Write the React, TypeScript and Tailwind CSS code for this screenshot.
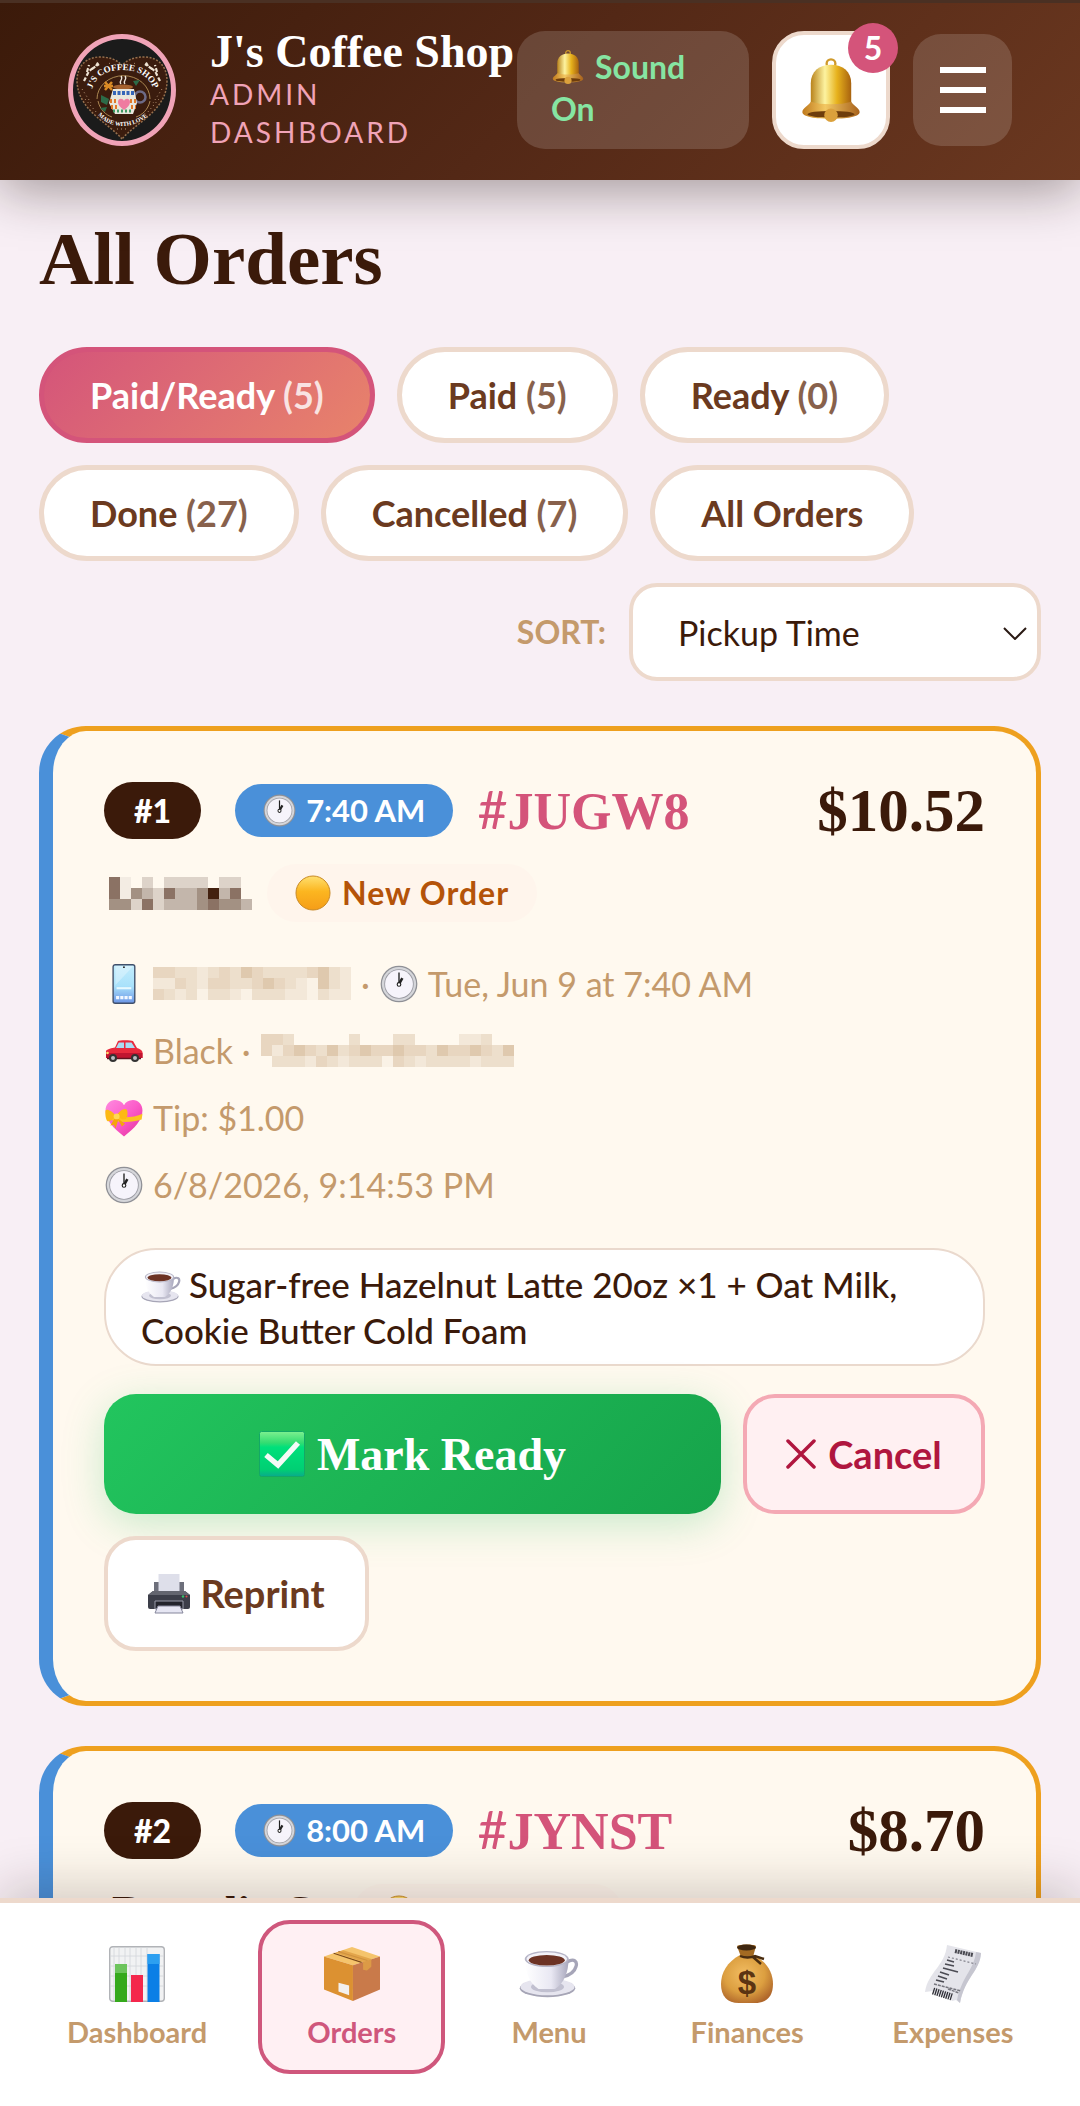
import { ReactNode, useState } from "react";
import clsx from "clsx";

const BellIcon = ({ className }: { className?: string }) => (
  <svg className={className} viewBox="0 0 36 38" aria-hidden="true">
    <defs>
      <linearGradient id="bellBody" x1="0" x2="1">
        <stop offset="0" stopColor="#b9831c" />
        <stop offset="0.35" stopColor="#fdf3a0" />
        <stop offset="0.65" stopColor="#e7b21c" />
        <stop offset="1" stopColor="#a8620f" />
      </linearGradient>
      <linearGradient id="bellRim" x1="0" x2="1">
        <stop offset="0" stopColor="#c07a1d" />
        <stop offset="0.4" stopColor="#f3c862" />
        <stop offset="1" stopColor="#a8621c" />
      </linearGradient>
    </defs>
    <circle cx="18" cy="3.4" r="2.6" fill="none" stroke="#cf9a2b" strokeWidth="1.4" />
    <path d="M6 30V15C6 8 11 4 18 4s12 4 12 11v15z" fill="url(#bellBody)" />
    <path d="M6 26c-1 2-5 4-5 6 0 3 8 4 17 4s17-1 17-4c0-2-4-4-5-6-6 2-18 2-24 0z" fill="url(#bellRim)" />
    <ellipse cx="18" cy="33.4" rx="14" ry="2" fill="#6e3d0c" />
    <circle cx="18" cy="34" r="4" fill="#dba13c" />
  </svg>
);

const ClockIcon = ({ className }: { className?: string }) => (
  <svg className={className} viewBox="0 0 36 36" aria-hidden="true">
    <circle cx="18" cy="18" r="17.4" fill="#8f9096" />
    <circle cx="18" cy="18" r="16.2" fill="#d5d6da" />
    <circle cx="18" cy="18" r="14" fill="#9b9ba3" />
    <circle cx="18" cy="18" r="13.2" fill="#f6f4fb" />
    <path d="M18 18V7" stroke="#222" strokeWidth="1.3" />
    <path d="M18 18l3.2-5.6" stroke="#222" strokeWidth="2.4" />
    <circle cx="18" cy="18.4" r="1.7" fill="#fff" stroke="#222" strokeWidth="1.1" />
  </svg>
);

const PhoneIcon = ({ className }: { className?: string }) => (
  <svg className={className} viewBox="0 0 36 38" aria-hidden="true">
    <defs>
      <linearGradient id="phoneScreen" x1="0" x2="0" y1="0" y2="1">
        <stop offset="0" stopColor="#c3ecfc" />
        <stop offset="0.55" stopColor="#a9e2fb" />
        <stop offset="1" stopColor="#6c95e6" />
      </linearGradient>
    </defs>
    <rect x="7.7" y="0.7" width="20.6" height="36.6" rx="2" fill="url(#phoneScreen)" stroke="#41506b" strokeWidth="1.3" />
    <path d="M27 2L10 20V2z" fill="#fff" opacity="0.3" />
    <circle cx="18" cy="3" r="0.9" fill="#222" />
    <path d="M11 23h14" stroke="#e6f9ff" strokeWidth="2" />
    <path d="M10.5 32h15" stroke="#f2f7ff" strokeWidth="3" strokeDasharray="3 1" />
  </svg>
);

const CarIcon = ({ className }: { className?: string }) => (
  <svg className={className} viewBox="0 0 38 24" aria-hidden="true">
    <path d="M1 12c1-2 6-3 9-3.5L13 2c1-1 13-1 15 0l4 7c3 1 5 2 5.5 4v6H1z" fill="#e8293d" />
    <path d="M1 14h36.5v5H1z" fill="#c11430" />
    <path d="M11 9l2.8-5.500H19V9zM20.5 9V3.5h6L30 9z" fill="#a9dcf3" />
    <path d="M2 19.5h34" stroke="#5f1220" strokeWidth="1.6" />
    <circle cx="8" cy="19" r="4" fill="#333" />
    <circle cx="8" cy="19" r="2" fill="#b9bcc3" />
    <circle cx="30" cy="19" r="4" fill="#333" />
    <circle cx="30" cy="19" r="2" fill="#b9bcc3" />
    <circle cx="2.5" cy="14" r="1.3" fill="#ffd96b" />
  </svg>
);

const GiftHeartIcon = ({ className }: { className?: string }) => (
  <svg className={className} viewBox="0 0 36 36" aria-hidden="true">
    <defs>
      <linearGradient id="giftHeart" x1="0" x2="1" y1="0" y2="1">
        <stop offset="0" stopColor="#ff8ae0" />
        <stop offset="0.5" stopColor="#fb5cc9" />
        <stop offset="1" stopColor="#e32d9c" />
      </linearGradient>
    </defs>
    <path d="M18 35.5C8 28 .5 20 .5 11 .5 5 4.5 1 9.5 1c4 0 7 2 8.5 5 1.5-3 4.500-5 8.500-5 5 0 9 4 9 10 0 9-7.500 17-17.500 24.500z" fill="url(#giftHeart)" />
    <path d="M1 14c8 4 25 5 34.500 0l-.8 5.500c-9 3-22 3-31 0z" fill="#fcc321" />
    <path d="M10 16c-3-5-9-7-9.500-5s0 9 2 10 6-3 7.500-5zM11 16c2-5 8-8 9.500-6s1 8-1 9-6-1-8.500-3z" fill="#fdb913" />
    <path d="M10 17l-5 8 3.500-.5L10 28l2.500-8 3.500 6 3-2.500z" fill="#f5a50b" />
    <circle cx="11" cy="16.5" r="2.8" fill="#ffd952" />
  </svg>
);

const CupIcon = ({ className }: { className?: string }) => (
  <svg className={className} viewBox="0 0 40 32" aria-hidden="true">
    <defs>
      <linearGradient id="cupBody" x1="0" x2="1">
        <stop offset="0" stopColor="#ffffff" />
        <stop offset="0.6" stopColor="#e9e8f3" />
        <stop offset="1" stopColor="#a9a8bd" />
      </linearGradient>
    </defs>
    <ellipse cx="19" cy="25.5" rx="18.5" ry="6" fill="#a6a5b6" />
    <ellipse cx="19" cy="24.6" rx="18" ry="5.6" fill="#e6e5ef" />
    <ellipse cx="19" cy="24.6" rx="11" ry="3.6" fill="#c1c0d0" />
    <path d="M32 8c5-3 7 0 6 3-1 4-5 6-9 7" fill="none" stroke="#a6a5b8" strokeWidth="2.2" />
    <path d="M4 6c0 9 3 16 9 20h11c6-4 9-11 9-20z" fill="url(#cupBody)" />
    <ellipse cx="18.5" cy="6" rx="14.7" ry="5.4" fill="#b5b4c6" />
    <ellipse cx="18.5" cy="6" rx="13.5" ry="4.5" fill="#f3f2f8" />
    <ellipse cx="18.5" cy="6.8" rx="12" ry="3.5" fill="#6d3324" />
  </svg>
);

const CheckIcon = ({ className }: { className?: string }) => (
  <svg className={className} viewBox="0 0 46 46" aria-hidden="true">
    <defs>
      <linearGradient id="checkTile" x1="0" x2="0" y1="0" y2="1">
        <stop offset="0" stopColor="#7df08f" />
        <stop offset="0.25" stopColor="#33dd72" />
        <stop offset="0.35" stopColor="#00e07b" />
        <stop offset="0.85" stopColor="#00cf73" />
        <stop offset="1" stopColor="#0aa98c" />
      </linearGradient>
    </defs>
    <rect x="0.5" y="0.5" width="45" height="45" rx="2" fill="url(#checkTile)" stroke="#13a866" />
    <path d="M7 24l12 10 20-22" fill="none" stroke="#f4fbf7" strokeWidth="5.5" />
  </svg>
);

const PrinterIcon = ({ className }: { className?: string }) => (
  <svg className={className} viewBox="0 0 42 40" aria-hidden="true">
    <path d="M6 8h30v12H6z" fill="#6d6f7b" />
    <path d="M10.5 0h21v17h-21z" fill="#dedfea" />
    <path d="M5 17h32l5 4v12q0 2-2 2H2q-2 0-2-2V21z" fill="#3c3e49" />
    <path d="M5 17h32l5 4H0z" fill="#63656f" />
    <path d="M7 27h28v8H7z" fill="#23242c" stroke="#9a9cab" />
    <path d="M10 32h22l3 7H7z" fill="#e6e6f3" stroke="#85869b" />
    <circle cx="35" cy="22.5" r="1.2" fill="#35c26a" />
    <circle cx="38.5" cy="22.5" r="1" fill="#e14c4c" />
  </svg>
);

const SunDotIcon = ({ className }: { className?: string }) => (
  <svg className={className} viewBox="0 0 36 36" aria-hidden="true">
    <defs>
      <linearGradient id="sunDot" x1="0" x2="0" y1="0" y2="1">
        <stop offset="0" stopColor="#ffe070" />
        <stop offset="0.45" stopColor="#fcb620" />
        <stop offset="1" stopColor="#f59d18" />
      </linearGradient>
    </defs>
    <circle cx="18" cy="18" r="17" fill="url(#sunDot)" stroke="#c98a26" />
  </svg>
);

const ChartIcon = ({ className }: { className?: string }) => (
  <svg className={className} viewBox="0 0 56 56" aria-hidden="true">
    <rect x="0.7" y="0.7" width="54.6" height="54.6" rx="3" fill="#f1f2f3" stroke="#b1b3b7" strokeWidth="1.4" />
    <path d="M5 1v54M10 1v54M16 1v54M21 1v54M27 1v54M32 1v54M38 1v54M1 10h54M1 20h54M1 30h54M1 40h54" stroke="#d3d5d9" strokeWidth="0.8" />
    <rect x="6" y="18" width="12" height="38" fill="#35a91c" />
    <rect x="6" y="18" width="12" height="9" fill="#6cc45c" />
    <rect x="22" y="29" width="12" height="27" fill="#f4274c" />
    <rect x="38.5" y="8" width="12" height="48" fill="#0b7fe6" />
    <rect x="38.5" y="8" width="12" height="10" fill="#2c9ff0" />
  </svg>
);

const BoxIcon = ({ className }: { className?: string }) => (
  <svg className={className} viewBox="0 0 58 56" aria-hidden="true">
    <path d="M0 10L29 0l29 10-28 9z" fill="#f5c46c" />
    <path d="M0 10l30 9v37L0 44z" fill="#dc9131" />
    <path d="M58 10l-28 9v37l28-12z" fill="#c97a4a" />
    <path d="M10 6.5L39 16M15 4.8L45 14" stroke="#7d4a1a" strokeWidth="1.2" />
    <path d="M20 3.5l29 9v8l-4.500 4-4-1v-8L12 6z" fill="#dfa045" opacity="0.85" />
    <path d="M15 37l11 3v10l-11-4z" fill="#f3f0ee" />
  </svg>
);

const MoneyBagIcon = ({ className }: { className?: string }) => (
  <svg className={className} viewBox="0 0 52 60" aria-hidden="true">
    <defs>
      <radialGradient id="moneyBag" cx="0.45" cy="0.4" r="0.65">
        <stop offset="0" stopColor="#f2bd63" />
        <stop offset="0.6" stopColor="#dc9f40" />
        <stop offset="1" stopColor="#b0672b" />
      </radialGradient>
    </defs>
    <path d="M19 11C6 18 0 29 0 40c0 12 6 19 18 19h16c12 0 18-7 18-19 0-11-6-22-19-29z" fill="url(#moneyBag)" />
    <path d="M16 2c3-2 17-2 19 0l-3 11H20z" fill="#a36a22" />
    <ellipse cx="25.5" cy="3.5" rx="9.5" ry="3" fill="#3f2710" />
    <path d="M19 12c5 2 10 2 15 0l9 3M32 13l8 7" fill="none" stroke="#4a2d10" strokeWidth="2.4" />
    <text x="26" y="50" textAnchor="middle" fontFamily="Liberation Sans" fontWeight="700" fontSize="33" fill="#5b3412">
      $
    </text>
  </svg>
);

const ReceiptIcon = ({ className }: { className?: string }) => (
  <svg className={className} viewBox="0 0 56 60" aria-hidden="true">
    <path d="M22 1l34 8c-1 18-16 24-21 50l-4-3-4 1-3-4-5 1-3-4-5 1-3-4-8 1C3 28 20 22 22 1z" fill="#e4e4ea" />
    <path d="M56 9c-1 18-16 24-21 50l-3-3c5-24 17-30 19-48z" fill="#c6c6d0" />
    <path d="M30 7l18 4" stroke="#4a4a52" strokeWidth="4" strokeDasharray="2 0.7" />
    <path d="M23 13l28 7" stroke="#85858e" strokeWidth="1.2" strokeDasharray="2 2" />
    <path d="M22 16l7 2M20 20l9 2M18 24l15 4M15 28l9 3M13 32l9 3M11 36l8 2" stroke="#4b4b53" strokeWidth="1.6" />
    <path d="M9 40l27 7M23 45l11 4" stroke="#77777f" strokeWidth="1.4" strokeDasharray="3 1" />
    <path d="M8 47l19 6" stroke="#2f2f36" strokeWidth="7" strokeDasharray="1.3 1" />
  </svg>
);

const CrossIcon = ({ className }: { className?: string }) => (
  <svg className={className} viewBox="0 0 30 30" fill="none" stroke="currentColor" strokeWidth="3.5" strokeLinecap="round" aria-hidden="true">
    <path d="M2 2l26 26M28 2L2 28" />
  </svg>
);

const ShopLogo = () => (
  <svg
    className="h-28 w-[108px] shrink-0 rounded-[50%] border-[5px] border-[#f0a3b7] bg-[#1b1b1b]"
    viewBox="0 0 98 102"
    role="img"
    aria-label="J's Coffee Shop"
  >
    <defs>
      <path id="logoTop" d="M19 50C24 35 36 31 49 31s27 4 32 21" />
      <path id="logoBottom" d="M25 76C38 91 62 91 78 74" />
    </defs>
    <path
      d="M49 100C36 84 5 72 4 42 4 26 14 18 27 18c10 0 18 3 22 9 4-6 12-9 22-9 13 0 23 8 23 24 0 30-32 42-45 58z"
      fill="#3b1c0e"
      stroke="#96704e"
      strokeWidth="1.5"
      strokeDasharray="2 1.5"
    />
    <path d="M24 60a25 22 0 0 1 53 0M25 62c2 9 8 14 14 16M77 62c-2 9-8 14-14 16" fill="none" stroke="#c7a263" strokeWidth="0.8" />
    <path d="M11 42l5-10 4-3M14 33l2-7M19 30l7-5M23 27l3-5M87 42l-5-10-4-3M84 33l-2-7M79 30l-7-5M75 27l-3-5" stroke="#eee2d2" strokeWidth="2.2" strokeDasharray="4 2" fill="none" />
    <path d="M9 50l9 14M12 60l12 14M89 50l-9 14M86 60l-12 14M44 90h11M36 24l4 3M62 24l-4 3" stroke="#bd9c7c" strokeWidth="1" strokeDasharray="1 3" fill="none" />
    <text fontFamily="Liberation Serif" fontWeight="700" fontSize="9" fill="#fff">
      <textPath href="#logoTop">J&apos;S COFFEE SHOP</textPath>
    </text>
    <text fontFamily="Liberation Serif" fontWeight="700" fontSize="6" fill="#fff">
      <textPath href="#logoBottom">MADE WITH LOVE</textPath>
    </text>
    <path d="M48 45c-3-3 3-4 0-8M52 45c-3-3 3-4 0-8" stroke="#f0e7dc" strokeWidth="1.3" fill="none" />
    <ellipse cx="50" cy="48" rx="10" ry="2.5" fill="#a5612e" />
    <circle cx="67" cy="58" r="5.5" fill="none" stroke="#6d6a86" strokeWidth="2.5" />
    <path d="M40 50h21l3 14-4 11H42l-6-11z" fill="#e8e6dc" />
    <path d="M40 54h22" stroke="#3465b8" strokeWidth="4" strokeDasharray="3 1.5" />
    <path d="M37 62h8M38 68h6M57 62h7M58 68h5" stroke="#e07a2a" strokeWidth="4" strokeDasharray="2 2" />
    <path d="M40 72h20" stroke="#3f9a63" strokeWidth="3" strokeDasharray="2 2" />
    <path d="M51 71c-4-3-6-5-6-8 0-4 5-4 6-1 1-3 6-3 6 1 0 3-2 5-6 8z" fill="#ef7ba0" />
    <path d="M32 43l7 8M39 43l-7 8M31 47h9" stroke="#d98a25" strokeWidth="2.5" />
    <path d="M28 56l8 4-2 6-6-3zM60 42l7-1-4 6zM34 68l-7 1 5 4z" fill="#2c6b48" />
  </svg>
);

type MosaicProps = {
  className?: string;
  rows: string[];
  palette: string[];
};

// each character is an index into the palette, "." leaves the cell empty
const Mosaic = ({ className, rows, palette }: MosaicProps) => (
  <svg
    className={className}
    viewBox={`0 0 ${rows[0].length * 11} ${rows.length * 11}`}
    shapeRendering="crispEdges"
    role="img"
    aria-label="Hidden"
  >
    {rows.map((row, y) =>
      row.split("").map((cell, x) =>
        cell === "." ? null : (
          <rect key={`${x}-${y}`} x={x * 11} y={y * 11} width="11" height="11" fill={palette[Number(cell)]} />
        ),
      ),
    )}
  </svg>
);

const DARK_PALETTE = ["#f3ece3", "#ddd3c9", "#c3b6ab", "#a39183", "#8b7264", "#43210f"];
const TAN_PALETTE = ["#faf2e6", "#f3e8d9", "#eddfcc", "#e8d6c0", "#dfc9ae"];

const FILTERS = [
  { label: "Paid/Ready", count: 5 },
  { label: "Paid", count: 5 },
  { label: "Ready", count: 0 },
  { label: "Done", count: 27 },
  { label: "Cancelled", count: 7 },
  { label: "All Orders" },
];

const NAV_ITEMS = [
  { label: "Dashboard", icon: <ChartIcon className="size-14" /> },
  { label: "Orders", icon: <BoxIcon className="size-14" /> },
  { label: "Menu", icon: <CupIcon className="h-14 w-[60px]" /> },
  { label: "Finances", icon: <MoneyBagIcon className="size-[60px]" /> },
  { label: "Expenses", icon: <ReceiptIcon className="size-[60px]" /> },
];

const Header = () => (
  <header className="relative z-10 flex h-[180px] shrink-0 items-center border-t-[3px] border-[#4a3023] bg-linear-135 from-[#3b1a0a] via-[#532816] to-[#6b3820] px-[68px] pb-[3px] shadow-[0_10px_50px_rgba(30,15,10,0.4)]">
    <ShopLogo />
    <div className="ml-[34px] min-w-0 flex-1">
      <p className="font-['Liberation_Serif',serif] text-[46px] leading-[46px] font-bold whitespace-nowrap text-white">
        J&apos;s Coffee Shop
      </p>
      <p className="w-56 text-[28px] leading-[38px] tracking-[3px] text-[#f0a3b7]">ADMIN DASHBOARD</p>
    </div>
    <div className="flex items-center gap-[23px]">
      <button
        type="button"
        className="h-[118px] w-[232px] rounded-[28px] bg-white/15 pb-1 pl-[34px] text-left text-[32px] leading-[42px] font-bold text-[#86e5a2]"
      >
        <BellIcon className="mr-[10px] inline-block size-[34px] align-[-5px]" />
        Sound
        <br />
        On
      </button>
      <button
        type="button"
        aria-label="Notifications"
        className="relative flex size-[118px] items-center justify-center rounded-[32px] border-4 border-[#edd9cc] bg-white"
      >
        <BellIcon className="size-16" />
        <span className="absolute -top-3 -right-3 flex size-[50px] items-center justify-center rounded-full bg-[#d4547a] text-[32px] leading-none font-bold text-white">
          5
        </span>
      </button>
      <button
        type="button"
        aria-label="Open menu"
        className="flex h-28 w-[99px] flex-col items-center justify-center gap-[14px] rounded-[28px] bg-white/15"
      >
        <span className="h-[6px] w-[46px] bg-white" />
        <span className="h-[6px] w-[46px] bg-white" />
        <span className="h-[6px] w-[46px] bg-white" />
      </button>
    </div>
  </header>
);

type OrderCardProps = {
  position: number;
  time: string;
  code: string;
  total: string;
  name: ReactNode;
  children?: ReactNode;
};

const OrderCard = ({ position, time, code, total, name, children }: OrderCardProps) => (
  <article className="rounded-[47px] border-[5px] border-l-[14px] border-[#eea01e] border-l-[#4a90d9] bg-[#fff9ef] px-[51px] pt-[51px] pb-[50px]">
    <div className="flex h-[57px] items-center gap-6">
      <span className="mr-[10px] flex h-[57px] items-center rounded-full bg-[#3b1a0a] px-[30px] text-[32px] font-black text-white">
        #{position}
      </span>
      <span className="flex h-[53px] items-center gap-[10px] rounded-full bg-[#4a90d9] px-7 text-[31px] font-bold whitespace-nowrap text-white">
        <ClockIcon className="size-[33px]" />
        {time}
      </span>
      <h2 className="flex items-baseline font-['Liberation_Serif',serif] text-[52px] leading-[57px] font-bold text-[#d4547a]">
        <span className="font-[Lato,sans-serif] font-normal">#</span>
        {code}
      </h2>
      <span className="ml-auto font-['Liberation_Serif',serif] text-[61px] leading-[57px] font-bold text-[#3b1a0a]">
        {total}
      </span>
    </div>
    <div className="mt-[25px] flex h-[58px] items-center gap-[15px]">
      {name}
      <span className="flex h-[58px] items-center gap-[11px] rounded-full bg-[#fff5ec] px-7 text-[32px] font-bold tracking-[1px] whitespace-nowrap text-[#b45309]">
        <SunDotIcon className="size-9" />
        New Order
      </span>
    </div>
    {children}
  </article>
);

const DetailRow = ({ icon, children }: { icon: ReactNode; children: ReactNode }) => (
  <div className="flex h-[67px] items-center">
    <span className="mr-[10px] flex w-[39px] shrink-0 justify-center">{icon}</span>
    {children}
  </div>
);

const BottomNav = () => {
  const [current, setCurrent] = useState("Orders");

  return (
    <nav className="relative z-10 grid h-52 shrink-0 grid-cols-[242fr_187fr_207fr_189fr_222fr] items-start border-t-[5px] border-[#edd9cc] bg-white px-4 pt-[17px] shadow-[0_-10px_50px_rgba(30,15,10,0.2)]">
      {NAV_ITEMS.map((item) => {
        const active = item.label === current;
        return (
          <button
            key={item.label}
            type="button"
            aria-current={active ? "page" : undefined}
            onClick={() => setCurrent(item.label)}
            className={clsx(
              "flex h-[154px] flex-col items-center justify-center gap-3 rounded-[32px] border-4 pt-[2px] text-[29px] leading-[36px] font-bold",
              active ? "border-[#cf577c] bg-[#fff0f3] text-[#cf577c]" : "border-transparent text-[#c49a6c]",
            )}
          >
            <span className="flex h-14 items-center">{item.icon}</span>
            {item.label}
          </button>
        );
      })}
    </nav>
  );
};

export default function App() {
  const [filter, setFilter] = useState("Paid/Ready");

  return (
    <div className="flex h-screen flex-col overflow-hidden bg-[#f8eff5] font-[Lato,'Open_Sans',sans-serif]">
      <Header />
      <main className="min-h-0 flex-1 overflow-hidden px-[39px] pt-[39px]">
        <h1 className="font-['Liberation_Serif',serif] text-[75px] leading-[80px] font-bold text-[#3b1a0a]">All Orders</h1>
        <div className="mt-12 flex flex-wrap gap-[22px]">
          {FILTERS.map((item) => {
            const active = item.label === filter;
            return (
              <button
                key={item.label}
                type="button"
                aria-pressed={active}
                onClick={() => setFilter(item.label)}
                className={clsx(
                  "h-24 rounded-full border-[5px] px-[46px] text-[36px] font-bold whitespace-nowrap",
                  active
                    ? "border-[#d4547a] bg-linear-135 from-[#d4547a] to-[#e8836a] text-white"
                    : "border-[#edd9cc] bg-white text-[#6b3a20]",
                )}
              >
                {item.label}
                {item.count !== undefined && <span className="opacity-80"> ({item.count})</span>}
              </button>
            );
          })}
          <div className="flex w-full items-center justify-end gap-[23px]">
            <label htmlFor="sort" className="text-[32px] font-bold text-[#c49a6c]">
              SORT:
            </label>
            <div className="relative">
              <select
                id="sort"
                defaultValue="pickup"
                className="h-[98px] w-[412px] appearance-none rounded-[28px] border-4 border-[#edd9cc] bg-white pl-[45px] text-[34px] text-[#3b1a0a]"
              >
                <option value="pickup">Pickup Time</option>
                <option value="created">Order Time</option>
              </select>
              <svg
                className="pointer-events-none absolute top-[44px] right-[14px] h-[13px] w-6"
                viewBox="0 0 24 13"
                fill="none"
                stroke="#2a1a14"
                strokeWidth="2"
              >
                <path d="M1 1l11 11L23 1" />
              </svg>
            </div>
          </div>
        </div>

        <div className="mt-[45px] flex flex-col gap-10">
          <OrderCard
            position={1}
            time="7:40 AM"
            code="JUGW8"
            total="$10.52"
            name={
              <Mosaic
                className="ml-[5px] h-[33px] w-[143px]"
                palette={DARK_PALETTE}
                rows={["40.1.1111.11.", "403214223524.", "3314122234332"]}
              />
            }
          >
            <div className="mt-7 text-[34px] text-[#c49a6c]">
              <DetailRow icon={<PhoneIcon className="h-10" />}>
                <Mosaic
                  className="h-[33px] w-[198px]"
                  palette={TAN_PALETTE}
                  rows={["332212324322223421", "113213322343210421", "321202210222110211"]}
                />
                <span className="mx-[10px]">·</span>
                <ClockIcon className="mr-[10px] size-[38px]" />
                Tue, Jun 9 at 7:40 AM
              </DetailRow>
              <DetailRow icon={<CarIcon className="h-6" />}>
                <span className="mr-[10px]">Black ·</span>
                <Mosaic
                  className="h-[33px] w-[253px]"
                  palette={TAN_PALETTE}
                  rows={["332.....2...22....112..", "31343242343343324334324", ".2221321222032122221222"]}
                />
              </DetailRow>
              <DetailRow icon={<GiftHeartIcon className="size-[38px]" />}>Tip: $1.00</DetailRow>
              <DetailRow icon={<ClockIcon className="size-[38px]" />}>6/8/2026, 9:14:53 PM</DetailRow>
            </div>
            <p className="mt-[30px] rounded-[52px] border-2 border-[#ead9cd] bg-white px-[35px] py-[11px] text-[35px] leading-[46px] font-medium text-[#3b1a0a]">
              <CupIcon className="mr-2 inline-block h-8 w-10 align-[-5px]" />
              Sugar-free Hazelnut Latte 20oz ×1 + Oat Milk, Cookie Butter Cold Foam
            </p>
            <div className="mt-7 flex flex-wrap gap-[22px]">
              <button
                type="button"
                className="flex h-[120px] min-w-[480px] flex-1 items-center justify-center gap-3 rounded-[32px] bg-linear-135 from-[#22c55e] to-[#16a34a] font-['Liberation_Serif',serif] text-[46px] font-bold text-white shadow-[0_10px_40px_rgba(34,197,94,0.25)]"
              >
                <CheckIcon className="size-[46px]" />
                Mark Ready
              </button>
              <button
                type="button"
                className="flex h-[120px] w-[242px] items-center justify-center gap-3 rounded-[32px] border-4 border-[#f4a9b4] bg-[#fff0f2] text-[38px] font-bold text-[#b0163f]"
              >
                <CrossIcon className="size-[30px]" />
                Cancel
              </button>
              <button
                type="button"
                className="flex h-[115px] w-[265px] items-center justify-center gap-[10px] rounded-[32px] border-4 border-[#edd9cc] bg-white text-[38px] font-bold text-[#6b3a20]"
              >
                <PrinterIcon className="h-10 w-[42px]" />
                Reprint
              </button>
            </div>
          </OrderCard>

          <OrderCard
            position={2}
            time="8:00 AM"
            code="JYNST"
            total="$8.70"
            name={
              <span className="pl-2 font-['Liberation_Serif',serif] text-[46px] leading-[58px] font-bold text-[#3b1a0a]">
                Brandie Co
              </span>
            }
          />
        </div>
      </main>
      <BottomNav />
    </div>
  );
}
